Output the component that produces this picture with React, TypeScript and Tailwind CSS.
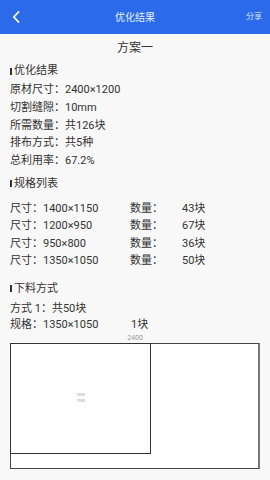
import React from "react";

const font = { fontFamily: 'Roboto, "Noto Sans CJK SC", "Noto Sans", sans-serif' };

function Heading({ children }: { children: React.ReactNode }) {
  return (
    <div className="flex items-center h-[18px] text-[11px] leading-[18px] text-[#333]">
      <span className="w-[2px] h-[7px] bg-[#333] mr-[2px]" />
      <span>{children}</span>
    </div>
  );
}

export default function App() {
  const info = [
    "原材尺寸：2400×1200",
    "切割缝隙：10mm",
    "所需数量：共126块",
    "排布方式：共5种",
    "总利用率：67.2%",
  ];
  const specs = [
    ["1400×1150", "43块"],
    ["1200×950", "67块"],
    ["950×800", "36块"],
    ["1350×1050", "50块"],
  ];
  return (
    <div className="w-[270px] h-[480px] bg-[#f8f8f8] overflow-hidden" style={font}>
      <div className="h-[34px] bg-[#2b6be9] flex items-center">
        <div className="w-[40px] pl-[12px] flex items-center">
          <svg width="8" height="12" viewBox="0 0 8 12" fill="none">
            <path d="M6.5 1L1.8 6l4.7 5" stroke="white" strokeWidth="1.8" strokeLinecap="round" strokeLinejoin="round" />
          </svg>
        </div>
        <div className="flex-1 text-center text-[10px] text-white/90">优化结果</div>
        <div className="w-[40px] pr-[8px] text-right text-[8px] text-white/80">分享</div>
      </div>
      <div className="h-[28px] flex items-center justify-center text-[12px] text-[#333]">方案一</div>
      <div className="px-[10px]">
        <Heading>优化结果</Heading>
        <div className="mt-[1px] text-[11px] leading-[17.75px] text-[#333]">
          {info.map((t) => (
            <div key={t}>{t}</div>
          ))}
        </div>
        <div className="mt-[5px]">
          <Heading>规格列表</Heading>
        </div>
        <div className="mt-[7px] text-[11px] leading-[17.5px] text-[#333]">
          {specs.map(([s, n]) => (
            <div key={s} className="grid grid-cols-[120px_52px_1fr]">
              <div>尺寸：{s}</div>
              <div>数量：</div>
              <div>{n}</div>
            </div>
          ))}
        </div>
        <div className="mt-[10px]">
          <Heading>下料方式</Heading>
        </div>
        <div className="mt-[3px] text-[11px] leading-[16px] text-[#333]">
          <div>方式 1：共50块</div>
          <div className="grid grid-cols-[121px_1fr]">
            <div>规格：1350×1050</div>
            <div>1块</div>
          </div>
        </div>
        <div className="h-[10px] w-[250px] text-center text-[7px] leading-[10px] text-[#999]">2400</div>
        <div className="relative w-[250px] h-[126px] bg-white border border-[#444] border-r-2 border-r-[#777]">
          <div className="absolute left-[-1px] top-[-1px] w-[141px] h-[111px] border border-[#333] flex flex-col items-center justify-center text-[4px] leading-[6px] text-[#999]">
            <div>1350</div>
            <div>1050</div>
          </div>
        </div>
      </div>
    </div>
  );
}
